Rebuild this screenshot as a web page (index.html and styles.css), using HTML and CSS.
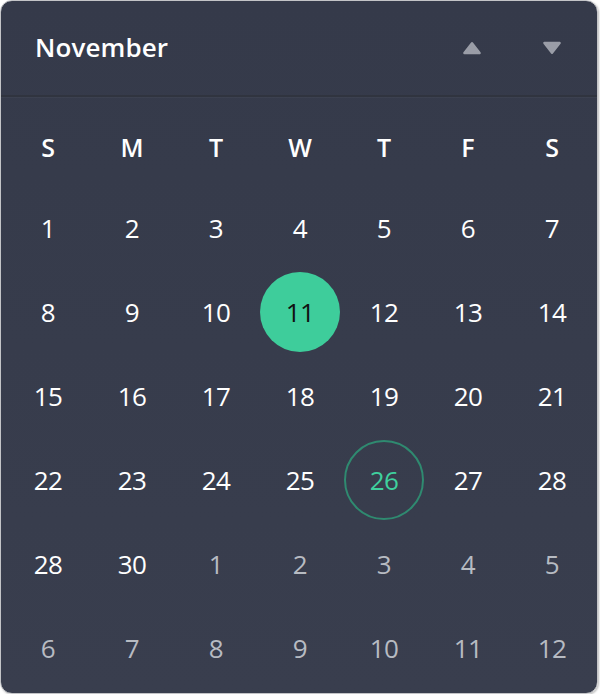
FILE: index.html
```html
<!DOCTYPE html>
<html>
<head>
<meta charset="utf-8">
<link rel="stylesheet" href="styles.css">
</head>
<body>
<div class="card">
  <div class="header">
    <div class="title">November</div>
    <div class="nav">
      <button class="nav-btn" aria-label="Previous month">
        <svg width="20" height="14" viewBox="0 0 20 14"><path d="M10 2.2 L17.6 12 L2.4 12 Z" fill="#9a9da7" stroke="#9a9da7" stroke-width="2.4" stroke-linejoin="round"/></svg>
      </button>
      <button class="nav-btn" aria-label="Next month">
        <svg width="20" height="14" viewBox="0 0 20 14"><path d="M2.4 2 L17.6 2 L10 11.8 Z" fill="#9a9da7" stroke="#9a9da7" stroke-width="2.4" stroke-linejoin="round"/></svg>
      </button>
    </div>
  </div>
  <div class="weekdays">
    <div>S</div><div>M</div><div>T</div><div>W</div><div>T</div><div>F</div><div>S</div>
  </div>
  <div class="days">
    <div class="day"><span>1</span></div>
    <div class="day"><span>2</span></div>
    <div class="day"><span>3</span></div>
    <div class="day"><span>4</span></div>
    <div class="day"><span>5</span></div>
    <div class="day"><span>6</span></div>
    <div class="day"><span>7</span></div>
    <div class="day"><span>8</span></div>
    <div class="day"><span>9</span></div>
    <div class="day"><span>10</span></div>
    <div class="day selected"><span>11</span></div>
    <div class="day"><span>12</span></div>
    <div class="day"><span>13</span></div>
    <div class="day"><span>14</span></div>
    <div class="day"><span>15</span></div>
    <div class="day"><span>16</span></div>
    <div class="day"><span>17</span></div>
    <div class="day"><span>18</span></div>
    <div class="day"><span>19</span></div>
    <div class="day"><span>20</span></div>
    <div class="day"><span>21</span></div>
    <div class="day"><span>22</span></div>
    <div class="day"><span>23</span></div>
    <div class="day"><span>24</span></div>
    <div class="day"><span>25</span></div>
    <div class="day today"><span>26</span></div>
    <div class="day"><span>27</span></div>
    <div class="day"><span>28</span></div>
    <div class="day"><span>28</span></div>
    <div class="day"><span>30</span></div>
    <div class="day muted"><span>1</span></div>
    <div class="day muted"><span>2</span></div>
    <div class="day muted"><span>3</span></div>
    <div class="day muted"><span>4</span></div>
    <div class="day muted"><span>5</span></div>
    <div class="day muted"><span>6</span></div>
    <div class="day muted"><span>7</span></div>
    <div class="day muted"><span>8</span></div>
    <div class="day muted"><span>9</span></div>
    <div class="day muted"><span>10</span></div>
    <div class="day muted"><span>11</span></div>
    <div class="day muted"><span>12</span></div>
  </div>
</div>
</body>
</html>
```
FILE: styles.css
```css
html, body {
  margin: 0;
  padding: 0;
  background: #ffffff;
}
body {
  font-family: "Open Sans", "Noto Sans", sans-serif;
}
.card {
  box-sizing: border-box;
  width: 598px;
  height: 694px;
  border: 1px solid #c3c4c7;
  border-radius: 12px;
  background: linear-gradient(180deg, #353a4a 0%, #393e4e 100%);
  box-shadow: 1px 1px 2px rgba(0,0,0,0.25);
  overflow: hidden;
  color: #ffffff;
}
.header {
  height: 94px;
  display: flex;
  align-items: center;
  justify-content: space-between;
  padding: 0 5px 0 34px;
  border-bottom: 2px solid #30343f;
  box-shadow: 0 1px 0 rgba(255,255,255,0.03);
}
.title {
  font-size: 26px;
  font-weight: 600;
  letter-spacing: 0.1px;
  margin-top: -2px;
}
.nav {
  display: flex;
  margin-top: 0;
}
.nav-btn {
  width: 80px;
  height: 40px;
  border: 0;
  background: transparent;
  padding: 0;
  display: flex;
  align-items: center;
  justify-content: center;
  cursor: pointer;
}
.weekdays {
  display: grid;
  grid-template-columns: repeat(7, 84px);
  padding: 0 5px;
  height: 80px;
  margin-top: 10px;
  align-items: center;
  font-size: 25px;
  font-weight: 600;
  text-align: center;
}
.days {
  display: grid;
  grid-template-columns: repeat(7, 84px);
  grid-auto-rows: 84px;
  padding: 0 5px;
}
.day {
  display: flex;
  align-items: center;
  justify-content: center;
  font-size: 26px;
  font-weight: 400;
  letter-spacing: -0.5px;
}
.day span {
  width: 80px;
  height: 80px;
  box-sizing: border-box;
  border-radius: 50%;
  display: flex;
  align-items: center;
  justify-content: center;
  margin-top: -2px;
}
.day.selected span {
  background: #3ecd9b;
  color: #111111;
}
.day.today span {
  border: 2px solid #2f8a70;
  color: #3fd09e;
}
.day.muted {
  color: #b7bbc2;
}
```
